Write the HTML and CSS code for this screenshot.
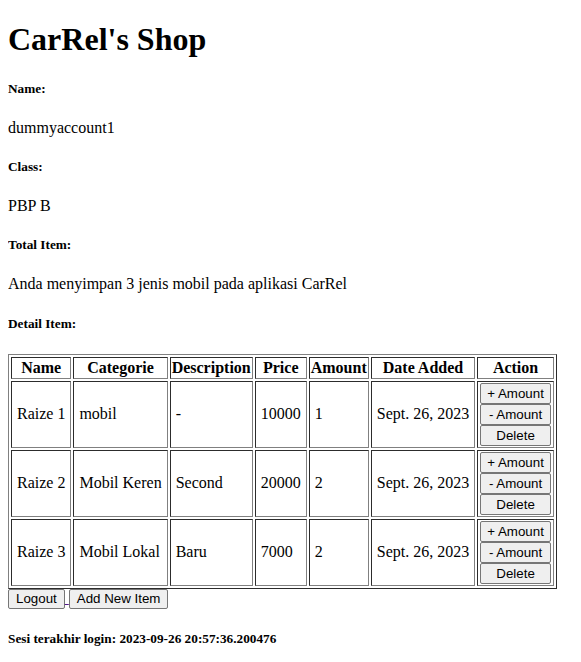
FILE: index.html
```html
<!DOCTYPE html>
<html>
<head>
<meta charset="utf-8">
<title>CarRel's Shop</title>
<link rel="stylesheet" href="styles.css">
</head>
<body>
<h1>CarRel's Shop</h1>
<h5>Name:</h5>
<p>dummyaccount1</p>
<h5>Class:</h5>
<p>PBP B</p>
<h5>Total Item:</h5>
<p>Anda menyimpan 3 jenis mobil pada aplikasi CarRel</p>
<h5>Detail Item:</h5>
<table class="items" border="1">
  <tr>
    <th>Name</th>
    <th>Categorie</th>
    <th>Description</th>
    <th>Price</th>
    <th>Amount</th>
    <th>Date Added</th>
    <th>Action</th>
  </tr>
  <tr>
    <td>Raize 1</td>
    <td>mobil</td>
    <td>-</td>
    <td>10000</td>
    <td>1</td>
    <td>Sept. 26, 2023</td>
    <td class="c-action">
      <form class="act"><button class="btn btn-full" type="button">+ Amount</button></form>
      <form class="act"><button class="btn btn-full" type="button">- Amount</button></form>
      <form class="act"><button class="btn btn-full" type="button">Delete</button></form>
    </td>
  </tr>
  <tr>
    <td>Raize 2</td>
    <td>Mobil Keren</td>
    <td>Second</td>
    <td>20000</td>
    <td>2</td>
    <td>Sept. 26, 2023</td>
    <td class="c-action">
      <form class="act"><button class="btn btn-full" type="button">+ Amount</button></form>
      <form class="act"><button class="btn btn-full" type="button">- Amount</button></form>
      <form class="act"><button class="btn btn-full" type="button">Delete</button></form>
    </td>
  </tr>
  <tr>
    <td>Raize 3</td>
    <td>Mobil Lokal</td>
    <td>Baru</td>
    <td>7000</td>
    <td>2</td>
    <td>Sept. 26, 2023</td>
    <td class="c-action">
      <form class="act"><button class="btn btn-full" type="button">+ Amount</button></form>
      <form class="act"><button class="btn btn-full" type="button">- Amount</button></form>
      <form class="act"><button class="btn btn-full" type="button">Delete</button></form>
    </td>
  </tr>
</table>
<div class="bottom-actions"><a class="link" href="#"><button class="btn btn-plain" type="button">Logout</button> </a><a class="link" href="#"><button class="btn btn-plain" type="button">Add New Item</button></a></div>
<h5>Sesi terakhir login: 2023-09-26 20:57:36.200476</h5>
</body>
</html>
```
FILE: styles.css
```css
html, body {
  background: #ffffff;
  color: #000000;
}
body {
  margin: 0 8px 8px 8px;
  font-family: "Liberation Serif", "Times New Roman", serif;
  font-size: 16px;
}
h1 {
  font-size: 2em;
  margin: 0.67em 0;
}
h5 {
  font-size: 0.83em;
  margin: 1.67em 0;
}
p {
  margin: 1em 0;
}
.items {
  border-collapse: separate;
  border-spacing: 2px;
  border: 1px outset #808080;
}
.items th {
  border: 1px inset #808080;
  padding: 1px;
  font-weight: bold;
  text-align: center;
}
.items td {
  border: 1px inset #808080;
  padding: 1px 5px;
  vertical-align: middle;
}
.items td.c-action {
  padding: 1px 2px;
}
.act {
  margin: 0;
}
.btn {
  font-family: "Liberation Sans", Arial, sans-serif;
  font-size: 13.333px;
  margin: 0;
  background: #efefef;
  color: #000000;
  border: 1px solid #767676;
  border-radius: 2px;
  line-height: normal;
}
.btn-full {
  display: block;
  width: 100%;
  box-sizing: border-box;
  padding: 2px 6px;
}
.btn-plain {
  padding: 1px 7px 2px 7px;
}
.bottom-actions {
  margin: 0;
}
.link {
  color: #551a8b;
  text-decoration: underline;
}
```
